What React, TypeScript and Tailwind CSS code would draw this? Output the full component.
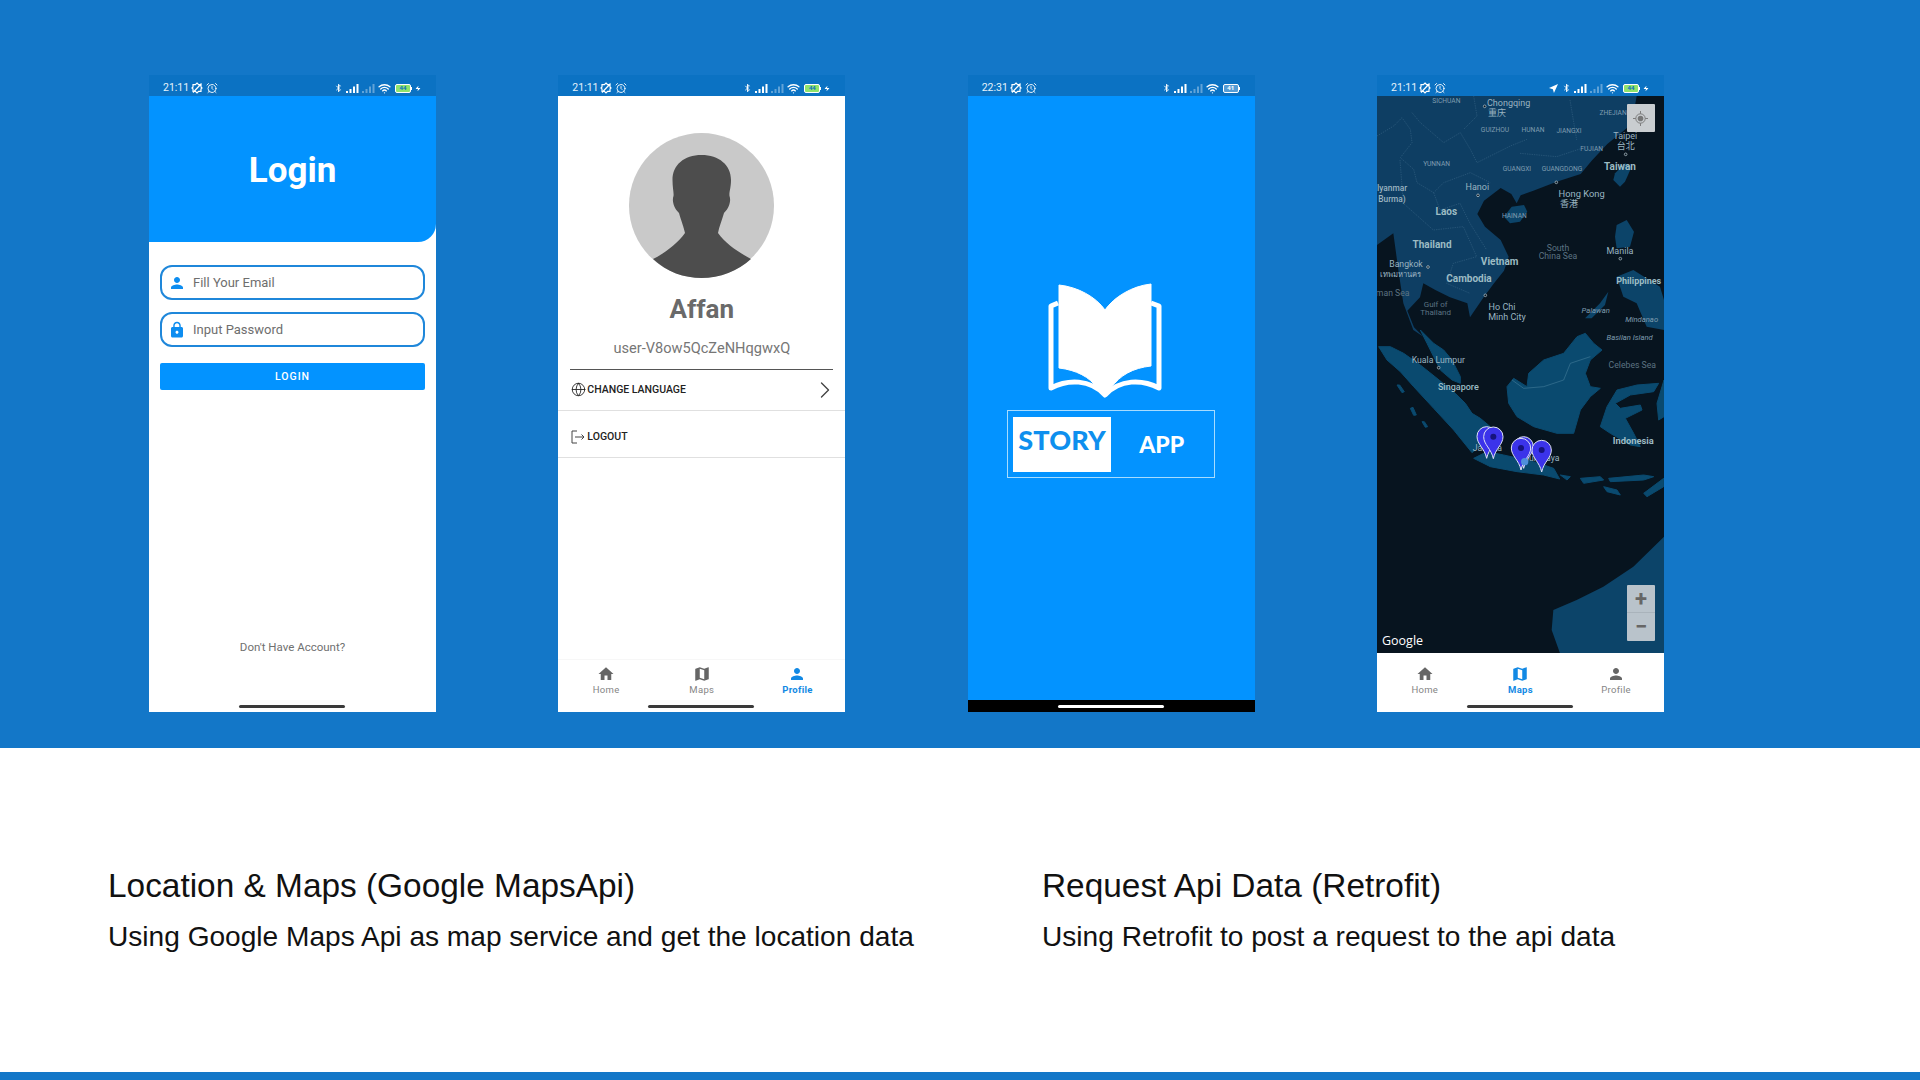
import { AlarmClock, Bluetooth, ChevronRight, Globe, Wifi, Zap } from "lucide-react"

const HOME = "M10 20v-6h4v6h5v-8h3L12 3 2 12h3v8z"
const MAP =
  "M20.5 3l-.16.03L15 5.1 9 3 3.36 4.9c-.21.07-.36.25-.36.48V20.5c0 .28.22.5.5.5l.16-.03L9 18.9l6 2.1 5.64-1.9c.21-.07.36-.25.36-.48V3.5c0-.28-.22-.5-.5-.5zM15 19l-6-2.11V5l6 2.11V19z"
const PERSON =
  "M12 12c2.21 0 4-1.79 4-4s-1.79-4-4-4-4 1.79-4 4 1.79 4 4 4zm0 2c-2.67 0-8 1.34-8 4v2h16v-2c0-2.66-5.33-4-8-4z"
const LOCK =
  "M18 8h-1V6c0-2.76-2.24-5-5-5S7 3.24 7 6v2H6c-1.1 0-2 .9-2 2v10c0 1.1.9 2 2 2h12c1.1 0 2-.9 2-2V10c0-1.1-.9-2-2-2zm-6 9c-1.1 0-2-.9-2-2s.9-2 2-2 2 .9 2 2-.9 2-2 2zm3.1-9H8.9V6c0-1.71 1.39-3.1 3.1-3.1 1.71 0 3.1 1.39 3.1 3.1v2z"

function MaterialIcon({ d, className }: { d: string; className: string }) {
  return (
    <svg viewBox="0 0 24 24" className={className} fill="currentColor">
      <path d={d} />
    </svg>
  )
}

function Signal({ faded }: { faded?: boolean }) {
  return (
    <svg viewBox="0 0 13 9" className={`h-[9px] w-[13px] ${faded ? "opacity-35" : ""}`} fill="white">
      <rect x="0" y="7" width="2" height="2" />
      <rect x="3.5" y="5" width="2" height="4" />
      <rect x="7" y="2.5" width="2" height="6.5" />
      <rect x="10.5" y="0" width="2" height="9" />
    </svg>
  )
}

function StatusBar({ time, battery, charging, located }: { time: string; battery: string; charging?: boolean; located?: boolean }) {
  return (
    <div className="flex h-[21px] items-center bg-[#0b72c3] pl-[14px] pr-[15px] pt-[5px] text-white">
      <span className="font-['Roboto',sans-serif] text-[10.5px] leading-none text-[#e6f2fb]">{time}</span>
      <svg viewBox="0 0 12 12" className="ml-[2px] h-[12px] w-[12px]" fill="none" stroke="white" strokeWidth="1.2">
        <path d="M6 1l1.6 1.6H10v2.3L11 6l-1 1.1v2.3H7.6L6 11 4.4 9.4H2V7.1L1 6l1-1.1V2.6h2.4zM2 10.5L10.5 1.5" />
      </svg>
      <AlarmClock className="ml-[3px] h-[12px] w-[12px]" strokeWidth={1.8} />
      <div className="ml-auto flex items-center gap-[3px]">
        {located && (
          <svg viewBox="0 0 10 10" className="mr-[1px] h-[9px] w-[9px]" fill="white">
            <path d="M10 0L0 4.5l4.3 1.2L5.5 10z" />
          </svg>
        )}
        <Bluetooth className="h-[12px] w-[9px]" strokeWidth={2.5} />
        <Signal />
        <Signal faded />
        <Wifi className="h-[13px] w-[13px]" strokeWidth={2.5} />
        <div className="ml-[1px] flex items-center">
          <div
            className={`flex h-[9px] w-[16px] items-center justify-center rounded-[2px] border border-white text-[6px] font-bold leading-none ${
              charging ? "bg-[#8fe36c] text-[#0b72c3]" : "bg-white/30 text-white"
            }`}
          >
            {battery}
          </div>
          <div className="h-[3px] w-[1px] bg-white" />
        </div>
        {charging && <Zap className="h-[9px] w-[6px]" fill="white" strokeWidth={0} />}
      </div>
    </div>
  )
}

function BottomNav({ active, tall }: { active: string; tall?: boolean }) {
  const items = [
    { name: "Home", d: HOME },
    { name: "Maps", d: MAP },
    { name: "Profile", d: PERSON },
  ]
  return (
    <div className={`relative shrink-0 bg-white ${tall ? "h-[59px] pt-[12px]" : "h-[53px] border-t border-[#f7f7f7] pt-[5px]"}`}>
      <div className="grid grid-cols-3">
        {items.map((item) => (
          <div
            key={item.name}
            className={`flex flex-col items-center ${item.name === active ? "text-[#1289e4]" : "text-[#666666]"}`}
          >
            <MaterialIcon d={item.d} className="h-[18px] w-[18px]" />
            <span
              className={`mt-[1px] font-['Roboto',sans-serif] text-[9.5px] leading-[12px] tracking-[0.3px] ${
                item.name === active ? "font-bold" : "text-[#858585]"
              }`}
            >
              {item.name}
            </span>
          </div>
        ))}
      </div>
      <HomeBar className="bg-[#3a3a3a]" />
    </div>
  )
}

function HomeBar({ className }: { className: string }) {
  return <div className={`absolute bottom-[4px] left-[90px] h-[3px] w-[106px] rounded-full ${className}`} />
}

function InputField({ icon, label }: { icon: string; label: string }) {
  return (
    <div className="flex h-[35px] items-center rounded-[12px] border-2 border-[#1f87da] pl-[6px]">
      <MaterialIcon d={icon} className="h-[18px] w-[18px] text-[#0d8df0]" />
      <span className="ml-[7px] font-['Roboto',sans-serif] text-[13px] text-[#6e6e6e]">{label}</span>
    </div>
  )
}

function LoginScreen() {
  return (
    <div className="flex h-[637px] w-[287px] flex-col bg-white">
      <StatusBar time="21:11" battery="44" charging />
      <div className="flex h-[146px] items-center justify-center rounded-br-[18px] bg-[#0393ff] pt-[4px]">
        <h1 className="font-['Roboto',sans-serif] text-[35px] font-bold text-white">Login</h1>
      </div>
      <div className="flex flex-1 flex-col px-[11px] pt-[23px]">
        <div className="flex flex-col gap-[12px]">
          <InputField icon={PERSON} label="Fill Your Email" />
          <InputField icon={LOCK} label="Input Password" />
        </div>
        <div className="mt-[16px] flex h-[27px] items-center justify-center rounded-[2px] bg-[#0393ff] font-['Roboto',sans-serif] text-[10.5px] font-medium tracking-[1px] text-white">
          LOGIN
        </div>
        <p className="mt-[249px] text-center font-['Roboto',sans-serif] text-[11.5px] text-[#707070]">Don't Have Account?</p>
      </div>
      <div className="relative h-[7px]">
        <HomeBar className="bottom-[2px] bg-[#3a3a3a]" />
      </div>
    </div>
  )
}

function ProfileScreen() {
  return (
    <div className="flex h-[637px] w-[287px] flex-col bg-white">
      <StatusBar time="21:11" battery="44" charging />
      <div className="flex flex-1 flex-col items-center">
        <svg viewBox="0 0 145 145" className="mt-[37px] h-[145px] w-[145px]">
          <circle cx="72.5" cy="72.5" r="72.5" fill="#c9c9c9" />
          <path
            d="M72.5 22C55 22 43.5 32 43.5 47C43.5 55 45 60 44.5 63C43 67 44 74 50 80C52 87 55 95 56 100C48 111 36 120 24 126C38 139 55 145 72.5 145C91 145 109 138 122 126C109 119 97 111 89 100C90 94 93 87 95 80C101 74 102 67 100.5 63C100 59 102 55 102 47C102 32 90 22 72.5 22Z"
            fill="#4d4d4d"
          />
        </svg>
        <h2 className="mt-[14px] font-['Roboto',sans-serif] text-[26px] font-bold leading-[34px] text-[#6a6a6a]">Affan</h2>
        <p className="mt-[12px] font-['Roboto',sans-serif] text-[14.6px] leading-[20px] text-[#767676]">user-V8ow5QcZeNHqgwxQ</p>
        <div className="mt-[11px] h-[1px] w-[263px] shrink-0 bg-[#555555]" />
        <div className="flex h-[41px] w-full shrink-0 items-center border-b border-[#e0e0e0] pb-[1px] pl-[13px] pr-[6px] text-[#222222]">
          <Globe className="h-[15px] w-[15px]" strokeWidth={1.4} />
          <span className="ml-[1px] font-['Roboto',sans-serif] text-[10.5px] font-medium">CHANGE LANGUAGE</span>
          <ChevronRight className="ml-auto h-[28px] w-[28px] text-[#444444]" strokeWidth={1.2} />
        </div>
        <div className="flex h-[47px] w-full shrink-0 items-center border-b border-[#e0e0e0] pl-[13px] pt-[5px] text-[#222222]">
          <svg viewBox="0 0 14 14" className="h-[14px] w-[14px]" fill="none" stroke="#444444" strokeWidth="1">
            <path d="M6 1H1v12h5M4 7h9M10.5 4.5L13 7l-2.5 2.5" />
          </svg>
          <span className="ml-[2px] font-['Roboto',sans-serif] text-[10.5px] font-medium">LOGOUT</span>
        </div>
      </div>
      <BottomNav active="Profile" />
    </div>
  )
}

function SplashScreen() {
  return (
    <div className="flex h-[637px] w-[287px] flex-col bg-[#0393ff]">
      <StatusBar time="22:31" battery="41" />
      <div className="flex flex-1 flex-col items-center">
        <svg viewBox="0 0 114 116" className="ml-[-13px] mt-[187px] h-[116px] w-[114px]">
          <path
            d="M10 20L3 23V105C20 96 42 96 57 112C72 96 94 96 111 105V23L103 20"
            fill="none"
            stroke="white"
            strokeWidth="5"
            strokeLinejoin="round"
          />
          <path
            d="M11 2C30 4 48 14 57 27C66 14 84 3 103 1V83C85 85 72 92 63 105L57 114L49 105C42 94 28 87 11 85Z"
            fill="white"
            stroke="white"
            strokeWidth="1"
            strokeLinejoin="round"
          />
        </svg>
        <div className="mt-[11px] flex h-[68px] w-[208px] items-center border border-[#a8dcff] p-[5px]">
          <div className="flex h-[55px] w-[98px] items-center justify-center bg-white pb-[8px] font-['Lato',sans-serif] text-[27px] font-black tracking-[0.2px] text-[#0e8fee]">
            STORY
          </div>
          <div className="flex-1 pl-[3px] text-center font-['Lato',sans-serif] text-[23px] font-black text-white">APP</div>
        </div>
      </div>
      <div className="relative h-[12px] shrink-0 bg-black">
        <HomeBar className="bottom-[3px] bg-white" />
      </div>
    </div>
  )
}

const MAJOR = "#9dbcc4"
const MINOR = "#7f9db0"
const CITY = "#9ab4c1"
const SEA = "#5c7382"

const LABELS: { t: string; x: number; y: number; s: number; c: string; w?: number; i?: boolean }[] = [
  { t: "SICHUAN", x: 229, y: 96, s: 20, c: MINOR },
  { t: "Chongqing", x: 416, y: 106, s: 27, c: CITY },
  { t: "重庆", x: 381, y: 136, s: 27, c: CITY },
  { t: "ZHEJIANG", x: 736, y: 131, s: 20, c: MINOR },
  { t: "GUIZHOU", x: 375, y: 183, s: 20, c: MINOR },
  { t: "HUNAN", x: 489, y: 183, s: 20, c: MINOR },
  { t: "JIANGXI", x: 597, y: 185, s: 20, c: MINOR },
  { t: "Taipei", x: 766, y: 204, s: 27, c: CITY },
  { t: "台北", x: 767, y: 235, s: 27, c: CITY },
  { t: "FUJIAN", x: 665, y: 239, s: 20, c: MINOR },
  { t: "YUNNAN", x: 200, y: 284, s: 20, c: MINOR },
  { t: "GUANGXI", x: 441, y: 299, s: 20, c: MINOR },
  { t: "GUANGDONG", x: 576, y: 299, s: 20, c: MINOR },
  { t: "Taiwan", x: 750, y: 298, s: 30, c: MAJOR, w: 700 },
  { t: "Iyanmar", x: 66, y: 360, s: 25, c: CITY, w: 500 },
  { t: "Burma)", x: 66, y: 392, s: 25, c: CITY, w: 500 },
  { t: "Hanoi", x: 322, y: 357, s: 27, c: CITY },
  { t: "Hong Kong", x: 635, y: 378, s: 28, c: CITY },
  { t: "香港", x: 597, y: 409, s: 27, c: CITY },
  { t: "Laos", x: 229, y: 431, s: 30, c: MAJOR, w: 700 },
  { t: "HAINAN", x: 433, y: 440, s: 20, c: MINOR },
  { t: "Thailand", x: 186, y: 531, s: 30, c: MAJOR, w: 700 },
  { t: "South", x: 564, y: 539, s: 26, c: SEA },
  { t: "China Sea", x: 564, y: 564, s: 26, c: SEA },
  { t: "Manila", x: 750, y: 548, s: 27, c: CITY },
  { t: "Bangkok", x: 108, y: 587, s: 26, c: CITY },
  { t: "Vietnam", x: 389, y: 581, s: 30, c: MAJOR, w: 700 },
  { t: "เทพมหานคร", x: 90, y: 618, s: 23, c: CITY },
  { t: "Cambodia", x: 297, y: 633, s: 30, c: MAJOR, w: 700 },
  { t: "Philippines", x: 806, y: 639, s: 27, c: MAJOR, w: 700 },
  { t: "man Sea", x: 68, y: 674, s: 26, c: SEA },
  { t: "Gulf of", x: 197, y: 707, s: 24, c: SEA },
  { t: "Thailand", x: 197, y: 731, s: 24, c: SEA },
  { t: "Ho Chi", x: 396, y: 716, s: 27, c: CITY },
  { t: "Minh City", x: 411, y: 747, s: 27, c: CITY },
  { t: "Palawan", x: 677, y: 725, s: 23, c: MINOR, i: true },
  { t: "Mindanao", x: 815, y: 753, s: 23, c: MINOR, i: true },
  { t: "Basilan Island", x: 779, y: 807, s: 23, c: MINOR, i: true },
  { t: "Celebes Sea", x: 787, y: 892, s: 26, c: SEA },
  { t: "Kuala Lumpur", x: 205, y: 875, s: 26, c: CITY },
  { t: "Singapore", x: 265, y: 956, s: 27, c: MAJOR, w: 500 },
  { t: "Indonesia", x: 790, y: 1118, s: 28, c: MAJOR, w: 700 },
  { t: "Jakarta", x: 352, y: 1140, s: 26, c: CITY },
  { t: "Surabaya", x: 515, y: 1171, s: 26, c: CITY },
]

// land north of Borneo, in the map's own coordinates
const LAND_NORTH = [
  "M21 78H800L790 135L770 175L712 222L665 272L632 312L560 335L490 362L452 376L440 400L424 372L392 354L342 392L322 432L345 470L392 510L416 560L402 602L372 640L342 680L300 742L292 700L240 682L196 660L160 640L150 682L112 722L132 772L160 800L130 780L100 700L85 600L70 490L21 525Z",
  "M402 440L425 410L462 405L472 425L450 455L420 460Z",
  "M735 310L765 280L785 290L765 335L750 350L730 330Z",
  "M740 465L770 450L792 485L780 530L740 535L735 500Z",
  "M740 620L790 600L870 650L882 690V780L830 770L800 700L760 680Z",
  "M645 745L690 700L715 665L705 705L665 745Z",
  "M550 1620L620 1590L700 1550L790 1490L882 1400V1750H570L545 1680Z",
]

// Indonesia, drawn from the crop that starts at y=780
const LAND_SOUTH = [
  "M130 0L170 40L200 60L225 90L250 140L250 160L225 150L190 120L170 80L150 40Z",
  "M5 50L40 50L80 70L130 105L180 145L235 190L265 220L285 250L310 265L340 290L320 340L285 368L230 300L170 235L110 170L70 125L30 90Z",
  "M290 385L330 365L380 375L470 395L530 415L548 447L500 435L420 425L340 410Z",
  "M390 170L410 145L450 170L455 130L500 90L560 70L600 20L625 10L650 40L675 60L640 90L625 130L640 170L670 175L640 200L610 240L590 310L540 310L470 290L420 260L395 220Z",
  "M670 290L690 230L720 180L780 165L845 160L830 185L760 195L715 220L730 235L790 225L795 240L745 265L770 310L790 350L760 345L700 310Z",
  "M550 435L580 440L570 450ZM610 445L670 440L680 450L620 460ZM695 445L800 435L830 440L800 450L700 455ZM680 470L720 480L730 495L690 485ZM800 490L860 445V470L810 500Z",
  "M60 165L68 165L82 185L75 188ZM100 235L108 232L118 255L110 256ZM135 275L142 275L152 290L145 292Z",
  "M840 220L861 150V260L845 270Z",
]

const BORDERS = [
  "M21 198L71 168L96 143L121 178L126 218L91 263L131 298L141 338L191 368L221 338L301 308L361 338",
  "M126 128L151 158L221 218L271 188L301 238L321 278L421 228L471 208M311 78L321 138L281 178",
  "M191 368L210 420L270 400L300 460L350 540M90 270L100 400L190 480L280 470L320 560L250 580L230 640L300 670",
  "M450 250L560 260L650 230M600 90L620 210",
]

const PINS = [
  { x: 350, y: 1165 },
  { x: 370, y: 1166 },
  { x: 461, y: 1195 },
  { x: 453, y: 1200 },
  { x: 515, y: 1206 },
]

function MapScreen() {
  return (
    <div className="flex h-[637px] w-[287px] flex-col bg-white">
      <StatusBar time="21:11" battery="44" charging located />
      <div className="relative flex-1 overflow-hidden bg-[#07141f]">
        <svg viewBox="21 78 861 1671" className="block h-full w-full">
          <g className="blur-[2px]">
            {LAND_NORTH.map((d, i) => (
              <path key={d} d={d} fill={i === 0 ? "#0e3e63" : "#0c4469"} />
            ))}
            <g transform="translate(21 780)">
              {LAND_SOUTH.map((d) => (
                <path key={d} d={d} fill="#0a4a6f" stroke="#0a4a6f" strokeWidth="3" strokeLinejoin="round" />
              ))}
            </g>
          </g>
          <path
            transform="translate(21 780)"
            d="M405 150L440 175L500 170L560 150L580 100L640 80"
            fill="none"
            stroke="#4f86a3"
            strokeWidth="1.5"
          />
          {BORDERS.map((d) => (
            <path key={d} d={d} fill="none" stroke="#3f6a8a" strokeWidth="1.5" strokeDasharray="4 3" />
          ))}
          {LABELS.map((l) => (
            <text
              key={l.t + l.x}
              x={l.x}
              y={l.y + 3}
              fontSize={l.s}
              fontWeight={l.w ?? 400}
              fontStyle={l.i ? "italic" : "normal"}
              fill={l.c}
              textAnchor="middle"
              className="font-['Roboto','Noto_Sans_CJK_SC',sans-serif]"
            >
              {l.t}
            </text>
          ))}
          {[
            [344, 109],
            [767, 253],
            [559, 337],
            [324, 376],
            [751, 566],
            [174, 591],
            [346, 676],
            [206, 893],
          ].map(([x, y]) => (
            <circle key={x} cx={x} cy={y} r="4" fill="#07141f" stroke="#c6d6de" strokeWidth="2" />
          ))}
          {PINS.map((p) => (
            <g key={p.x}>
              <path
                d={`M${p.x} ${p.y}C${p.x - 6} ${p.y - 30} ${p.x - 29} ${p.y - 42} ${p.x - 29} ${p.y - 66}A29 29 0 0 1 ${p.x + 29} ${p.y - 66}C${p.x + 29} ${p.y - 42} ${p.x + 6} ${p.y - 30} ${p.x} ${p.y}Z`}
                fill="#3b33ea"
                stroke="#dfe3f5"
                strokeWidth="3"
              />
              <circle cx={p.x} cy={p.y - 66} r="9" fill="#16137f" />
            </g>
          ))}
          <circle cx="464" cy="1175" r="11" fill="#4f8fdc" />
        </svg>
        <div className="absolute right-[9px] top-[8px] flex h-[28px] w-[28px] items-center justify-center rounded-[1px] bg-[#c9cdd0]">
          <svg viewBox="0 0 16 16" className="h-[15px] w-[15px]" fill="none" stroke="#777777" strokeWidth="1">
            <circle cx="8" cy="8" r="5" />
            <circle cx="8" cy="8" r="3" fill="#777777" stroke="none" />
            <path d="M8 0v3M8 13v3M0 8h3M13 8h3" />
          </svg>
        </div>
        <div className="absolute bottom-[12px] right-[9px] flex h-[56px] w-[28px] flex-col rounded-[1px] bg-[#b9c3cb] text-[#666666]">
          <div className="flex h-[28px] items-center justify-center border-b border-[#a9b3bb] font-['Roboto',sans-serif] text-[22px] font-bold leading-none">+</div>
          <div className="flex h-[28px] items-center justify-center font-['Roboto',sans-serif] text-[22px] font-bold leading-none">−</div>
        </div>
        <span className="absolute bottom-[3px] left-[5px] font-['Open_Sans',sans-serif] text-[12.5px] leading-[18px] text-white">Google</span>
      </div>
      <BottomNav active="Maps" tall />
    </div>
  )
}

function Feature({ title, text }: { title: string; text: string }) {
  return (
    <div className="w-[934px] pl-[108px] font-['Liberation_Sans',sans-serif] text-[#111111]">
      <h3 className="text-[33.4px] leading-[44px]">{title}</h3>
      <p className="mt-[8px] text-[28.1px] leading-[42px]">{text}</p>
    </div>
  )
}

export default function App() {
  return (
    <div className="flex h-[1080px] w-[1920px] flex-col overflow-hidden bg-white">
      <section className="flex h-[748px] shrink-0 justify-between bg-[#1377c8] pl-[149px] pr-[256px] pt-[75px]">
        <LoginScreen />
        <ProfileScreen />
        <SplashScreen />
        <MapScreen />
      </section>
      <section className="flex flex-1 pt-[116px]">
        <Feature title="Location & Maps (Google MapsApi)" text="Using Google Maps Api as map service and get the location data" />
        <Feature title="Request Api Data (Retrofit)" text="Using Retrofit to post a request to the api data" />
      </section>
      <div className="h-[8px] shrink-0 bg-[#1377c8]" />
    </div>
  )
}
